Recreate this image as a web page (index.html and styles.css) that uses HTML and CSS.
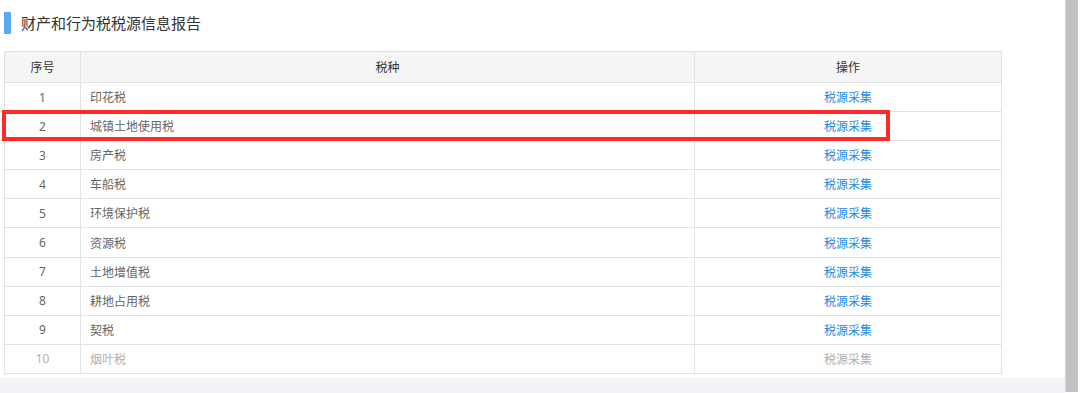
FILE: index.html
```html
<!DOCTYPE html>
<html lang="zh-CN">
<head>
<meta charset="utf-8">
<title>财产和行为税税源信息报告</title>
<link rel="stylesheet" href="styles.css">
</head>
<body>
<div class="page">
  <div class="main">
    <div class="panel">
      <div class="title">
        <span class="title-bar"></span>
        <h2 class="title-text">财产和行为税税源信息报告</h2>
      </div>
      <table class="tax-table">
        <colgroup>
          <col class="col-no">
          <col class="col-name">
          <col class="col-op">
        </colgroup>
        <thead>
          <tr><th>序号</th><th>税种</th><th>操作</th></tr>
        </thead>
        <tbody>
          <tr><td class="c-no">1</td><td class="c-name">印花税</td><td class="c-op"><a class="op-link">税源采集</a></td></tr>
          <tr><td class="c-no">2</td><td class="c-name">城镇土地使用税</td><td class="c-op"><a class="op-link">税源采集</a></td></tr>
          <tr><td class="c-no">3</td><td class="c-name">房产税</td><td class="c-op"><a class="op-link">税源采集</a></td></tr>
          <tr><td class="c-no">4</td><td class="c-name">车船税</td><td class="c-op"><a class="op-link">税源采集</a></td></tr>
          <tr><td class="c-no">5</td><td class="c-name">环境保护税</td><td class="c-op"><a class="op-link">税源采集</a></td></tr>
          <tr><td class="c-no">6</td><td class="c-name">资源税</td><td class="c-op"><a class="op-link">税源采集</a></td></tr>
          <tr><td class="c-no">7</td><td class="c-name">土地增值税</td><td class="c-op"><a class="op-link">税源采集</a></td></tr>
          <tr><td class="c-no">8</td><td class="c-name">耕地占用税</td><td class="c-op"><a class="op-link">税源采集</a></td></tr>
          <tr><td class="c-no">9</td><td class="c-name">契税</td><td class="c-op"><a class="op-link">税源采集</a></td></tr>
          <tr class="disabled"><td class="c-no">10</td><td class="c-name">烟叶税</td><td class="c-op"><a class="op-link">税源采集</a></td></tr>
        </tbody>
      </table>
    </div>
    <div class="bottom-gap"></div>
  </div>
  <div class="scrollbar"></div>
</div>
<div class="highlight"></div>
</body>
</html>
```

FILE: styles.css
```css
* { box-sizing: border-box; }
html, body {
  margin: 0;
  padding: 0;
  background: #ffffff;
  font-family: "Noto Sans", "Noto Sans CJK SC", sans-serif;
  width: 1080px;
  height: 393px;
  overflow: hidden;
}
.page {
  display: flex;
  width: 1080px;
  height: 393px;
  position: relative;
}
.main {
  width: 1065px;
  display: flex;
  flex-direction: column;
}
.panel {
  background: #ffffff;
  padding: 12px 0 4px 4px;
}
.title {
  display: flex;
  align-items: center;
  height: 22px;
}
.title-bar {
  width: 7px;
  height: 22px;
  background: #56a9ef;
  border-radius: 1px;
}
.title-text {
  margin: 0 0 0 10px;
  font-size: 15px;
  font-weight: normal;
  color: #333333;
  line-height: 22px;
}
.tax-table {
  margin-top: 17px;
  width: 997px;
  border-collapse: collapse;
  table-layout: fixed;
  font-size: 12px;
}
.col-no { width: 76px; }
.col-name { width: 614px; }
.col-op { width: 307px; }
.tax-table th,
.tax-table td {
  border: 1px solid #e2e2e2;
  padding: 0;
}
.tax-table th {
  height: 31px;
  background: #f5f5f5;
  color: #333333;
  font-weight: normal;
  text-align: center;
}
.tax-table td {
  height: 29.1px;
  color: #666666;
}
.c-no { text-align: center; }
.c-name { padding-left: 9px !important; }
.c-op { text-align: center; }
.op-link {
  color: #1d8ae4;
  text-decoration: none;
}
.disabled td,
.disabled .op-link {
  color: #b0b0b0;
}
.bottom-gap {
  height: 15px;
  background: #f2f3f7;
}
.scrollbar {
  width: 13px;
  height: 392px;
  background: #c1c1c1;
  border-left: 1px solid #d6d6d6;
}
.highlight {
  position: absolute;
  left: 2px;
  top: 110px;
  width: 888px;
  height: 31px;
  border: 4px solid #ff2b2b;
  pointer-events: none;
}
```
